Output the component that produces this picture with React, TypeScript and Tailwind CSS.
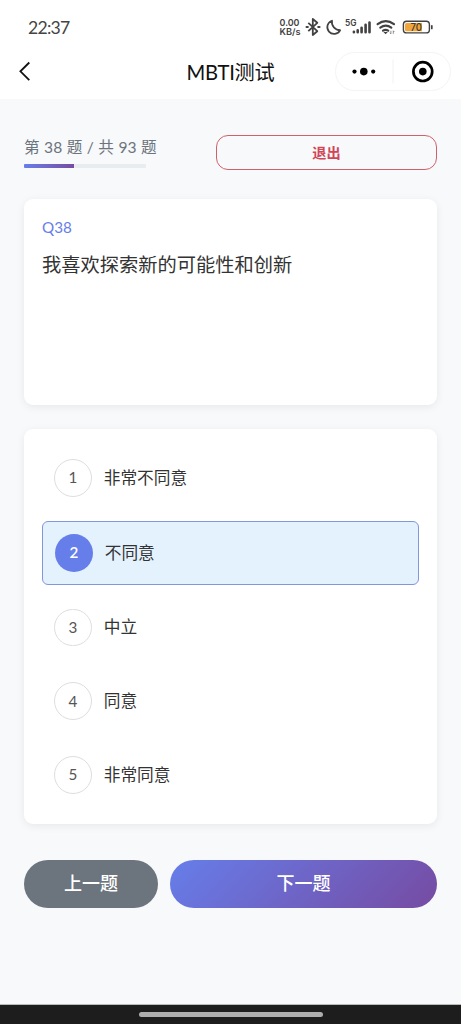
import { useState } from 'react';

const options = ['非常不同意', '不同意', '中立', '同意', '非常同意'];

function StatusIcons() {
  return (
    <svg className="block h-[22px] w-[158px] text-[#424242]" viewBox="0 0 158 22" fill="none" stroke="currentColor">
      <g fill="currentColor" stroke="none" fontFamily="Inter, sans-serif" fontWeight="600">
        <text x="1.5" y="10" fontSize="9" textLength="20" lengthAdjust="spacingAndGlyphs">0.00</text>
        <text x="1.5" y="19" fontSize="9" textLength="21" lengthAdjust="spacingAndGlyphs">KB/s</text>
        <text x="67" y="10" fontSize="8.8" textLength="11.5" lengthAdjust="spacingAndGlyphs">5G</text>
      </g>
      <path d="M30.3 6.8 39.3 15.2 34.8 19V3L39.3 6.8 30.3 15.2" strokeWidth="1.8" strokeLinejoin="round" />
      <path d="M28.6 11h1.2M40.3 11h1.2" strokeWidth="2.2" strokeLinecap="round" />
      <path d="M54 4.7A6.8 6.8 0 1 0 62.2 14.2 8.2 8.2 0 0 1 54 4.7Z" strokeWidth="1.7" strokeLinejoin="round" />
      <path d="M75.9 15.8v.4M79.7 14.4v1.8M83.6 11.7v4.5M87.6 8.8v7.4M91.5 6.5v9.7" strokeWidth="2.6" strokeLinecap="round" />
      <g strokeWidth="2.2" strokeLinecap="round">
        <path d="M99.6 8.1q8.2-5.8 16.4 0M102.3 11.6q5.5-4 11 0M105 14.7q2.6-1.7 5.2 0" />
      </g>
      <path d="m105.4 16 2.2 2.2 2.2-2.2Z" fill="currentColor" stroke="none" />
      <path d="M112.9 14.8v3m-1-1 1 1M115.3 17.8v-3m1 1-1-1" strokeWidth=".6" />
      <rect x="125.4" y="5.3" width="26" height="11.6" rx="3.2" strokeWidth="1.4" fill="#fff" />
      <path d="M128.5 7H144v8.2h-15.5a1.5 1.5 0 0 1-1.5-1.5V8.5A1.5 1.5 0 0 1 128.5 7Z" fill="#f1a63c" stroke="none" />
      <path d="M153.8 9.8v2.6" strokeWidth="1.7" strokeLinecap="round" />
      <text x="132.5" y="14.7" fill="#473c2c" stroke="none" fontFamily="Inter, sans-serif" fontSize="10" fontWeight="500" textLength="11.5" lengthAdjust="spacingAndGlyphs">70</text>
    </svg>
  );
}

export default function App() {
  const [selected, setSelected] = useState(1);

  return (
    <div className="flex h-[1024px] w-[461px] flex-col bg-[#f8f9fb] font-['Lato','Noto_Sans_CJK_SC',sans-serif] text-[#333]">
      <header className="h-[99px] shrink-0 bg-white">
        <div className="flex h-[45px] items-start justify-between pt-4 pr-[25px] pl-7">
          <span className="text-[17.6px] leading-[23px] tracking-[-0.75px] text-[#444]">22:37</span>
          <StatusIcons />
        </div>
        <div className="grid h-[54px] grid-cols-[120px_1fr_120px] items-center">
          <button className="pb-0.5 pl-[18px]" aria-label="返回">
            <svg className="block h-[22px] w-[14px]" viewBox="0 0 14 22" fill="none" stroke="#111" strokeWidth="1.8">
              <path d="M11.3 2.5 2.4 11.3l8.9 8.9" />
            </svg>
          </button>
          <h1 className="text-center text-[20.2px] leading-7 tracking-[-0.25px] text-[#111]">MBTI测试</h1>
          <div className="mb-px -ml-1.5 flex h-[39px] w-[116px] items-center rounded-full border border-[#f4f4f4]">
            <svg className="block h-full w-full" viewBox="0 0 114 37" fill="none">
              <g fill="#000">
                <circle cx="18.5" cy="18.6" r="2.1" />
                <circle cx="27.8" cy="18.6" r="3.8" />
                <circle cx="37.2" cy="18.6" r="2.1" />
                <circle cx="86.8" cy="18.6" r="3.8" />
              </g>
              <circle cx="86.8" cy="18.6" r="9.4" stroke="#000" strokeWidth="2.7" />
              <path d="M57 6.5v24" stroke="#f2f2f2" />
            </svg>
          </div>
        </div>
      </header>

      <main className="flex grow flex-col px-6 pt-9">
        <div className="flex h-[35px] items-start justify-between">
          <div className="w-[150px]">
            <p className="text-[15.6px] leading-6 whitespace-nowrap [word-spacing:0.5px] text-[#6c757d]">第 38 题 / 共 93 题</p>
            <div className="mt-[5px] h-1 w-[122px] overflow-hidden rounded-[1px] bg-[#e9ecef]">
              <div className="h-full w-[41%] bg-linear-to-r from-[#667eea] to-[#764ba2]" />
            </div>
          </div>
          <button className="h-[34.5px] w-[221px] rounded-xl border border-[#d0606d] text-[14.2px] font-bold text-[#d04656]">退出</button>
        </div>

        <section className="mt-[29px] h-[206px] rounded-[9px] bg-white px-[18px] pt-[17px] shadow-[0_2px_8px_rgba(0,0,0,0.07)]">
          <p className="text-[15.2px] leading-[23px] text-[#667eea]">Q38</p>
          <h2 className="mt-3 text-[19.25px] leading-[28px]">我喜欢探索新的可能性和创新</h2>
        </section>

        <section className="mt-6 flex h-[394.5px] flex-col gap-3 rounded-[9px] bg-white p-[18px] shadow-[0_2px_8px_rgba(0,0,0,0.07)]">
          {options.map((label, i) => {
            const active = i === selected;
            return (
              <button
                key={label}
                onClick={() => setSelected(i)}
                className={`flex shrink-0 items-center gap-3 px-3 text-left ${active ? 'h-[63.75px] rounded-md border border-[#8296da] bg-[#e3f2fd]' : 'h-[61.75px]'}`}
              >
                <span
                  className={`flex size-[37.75px] items-center justify-center rounded-full text-[15.2px] ${active ? 'bg-[#667eea] font-semibold text-white' : 'border border-[#dedede] text-[#555]'}`}
                >
                  {i + 1}
                </span>
                <span className="pt-px text-[16.7px]">{label}</span>
              </button>
            );
          })}
        </section>

        <div className="mt-9 flex h-12 gap-3 text-[18px] font-medium text-white">
          <button className="w-[134px] rounded-full bg-[#6c757d]">上一题</button>
          <button className="grow rounded-full bg-linear-[135deg] from-[#667eea] to-[#764ba2]">下一题</button>
        </div>
      </main>

      <footer className="flex h-5 shrink-0 justify-center border-t border-[#b8bdba] bg-[#1d1d1d] pt-[7px]">
        <div className="h-[5px] w-[184px] rounded-full bg-[#adadad]" />
      </footer>
    </div>
  );
}
